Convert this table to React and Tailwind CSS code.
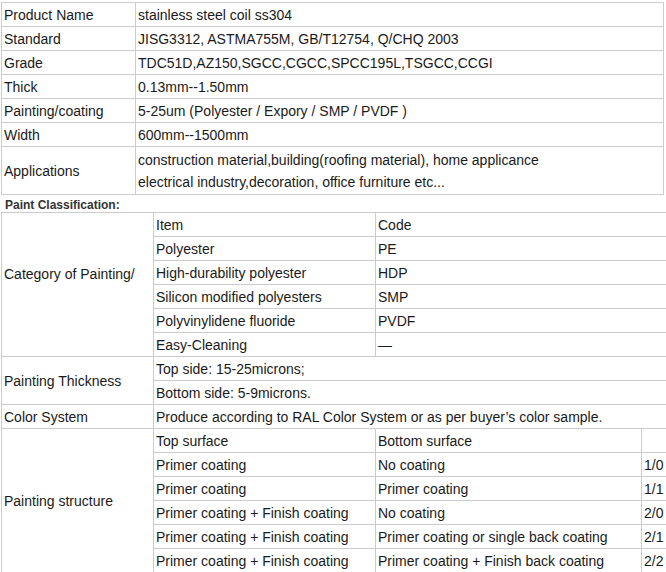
import React from 'react';

const specs = [
  ['Product Name', 'stainless steel coil ss304'],
  ['Standard', 'JISG3312, ASTMA755M, GB/T12754, Q/CHQ 2003'],
  ['Grade', 'TDC51D,AZ150,SGCC,CGCC,SPCC195L,TSGCC,CCGI'],
  ['Thick', '0.13mm--1.50mm'],
  ['Painting/coating', '5-25um (Polyester / Expory / SMP / PVDF )'],
  ['Width', '600mm--1500mm'],
];

const categories = [
  ['Item', 'Code'],
  ['Polyester', 'PE'],
  ['High-durability polyester', 'HDP'],
  ['Silicon modified polyesters', 'SMP'],
  ['Polyvinylidene fluoride', 'PVDF'],
  ['Easy-Cleaning', '\u2014'],
];

const structure = [
  ['Top surface', 'Bottom surface', ''],
  ['Primer coating', 'No coating', '1/0'],
  ['Primer coating', 'Primer coating', '1/1'],
  ['Primer coating + Finish coating', 'No coating', '2/0'],
  ['Primer coating + Finish coating', 'Primer coating or single back coating', '2/1'],
  ['Primer coating + Finish coating', 'Primer coating + Finish back coating', '2/2'],
];

const td = 'border border-[#cccccc] h-[24px] p-0 pl-[2px] align-middle leading-[22px]';

export default function App() {
  return (
    <div className="w-[666px] h-[572px] overflow-hidden bg-white text-[14px] text-[#1a1a1a] font-['Liberation_Sans',Arial,sans-serif]">
      <table className="ml-px mt-[2px] w-[663px] border-collapse">
        <tbody>
          {specs.map(([k, v]) => (
            <tr key={k}>
              <td className={`${td} w-[134px]`}>{k}</td>
              <td className={td}>{v}</td>
            </tr>
          ))}
          <tr>
            <td className={`${td} h-[48px]`}>Applications</td>
            <td className={`${td} h-[48px]`}>
              construction material,building(roofing material), home applicance
              <br />
              electrical industry,decoration, office furniture etc...
            </td>
          </tr>
        </tbody>
      </table>

      <div className="h-[17px] pl-[5px] pt-[3px] text-[12px] font-bold leading-[14px] text-[#333]">
        Paint Classification:
      </div>

      <table className="ml-px w-[760px] border-collapse">
        <colgroup>
          <col className="w-[152px]" />
          <col className="w-[222px]" />
          <col className="w-[266px]" />
          <col />
        </colgroup>
        <tbody>
          {categories.map(([item, code], i) => (
            <tr key={item}>
              {i === 0 && (
                <td rowSpan={6} className={td}>
                  Category of Painting/
                  <br />
                  &nbsp;
                </td>
              )}
              <td className={td}>{item}</td>
              <td colSpan={2} className={td}>{code}</td>
            </tr>
          ))}
          <tr>
            <td rowSpan={2} className={td}>Painting Thickness</td>
            <td colSpan={3} className={td}>Top side: 15-25microns;</td>
          </tr>
          <tr>
            <td colSpan={3} className={td}>Bottom side: 5-9microns.</td>
          </tr>
          <tr>
            <td className={td}>Color System</td>
            <td colSpan={3} className={td}>
              Produce according to RAL Color System or as per buyer&rsquo;s color sample.
            </td>
          </tr>
          {structure.map(([top, bottom, code], i) => (
            <tr key={i}>
              {i === 0 && (
                <td rowSpan={6} className={td}>Painting structure</td>
              )}
              <td className={`${td} whitespace-nowrap`}>{top}</td>
              <td className={`${td} whitespace-nowrap`}>{bottom}</td>
              <td className={td}>{code}</td>
            </tr>
          ))}
        </tbody>
      </table>
    </div>
  );
}
